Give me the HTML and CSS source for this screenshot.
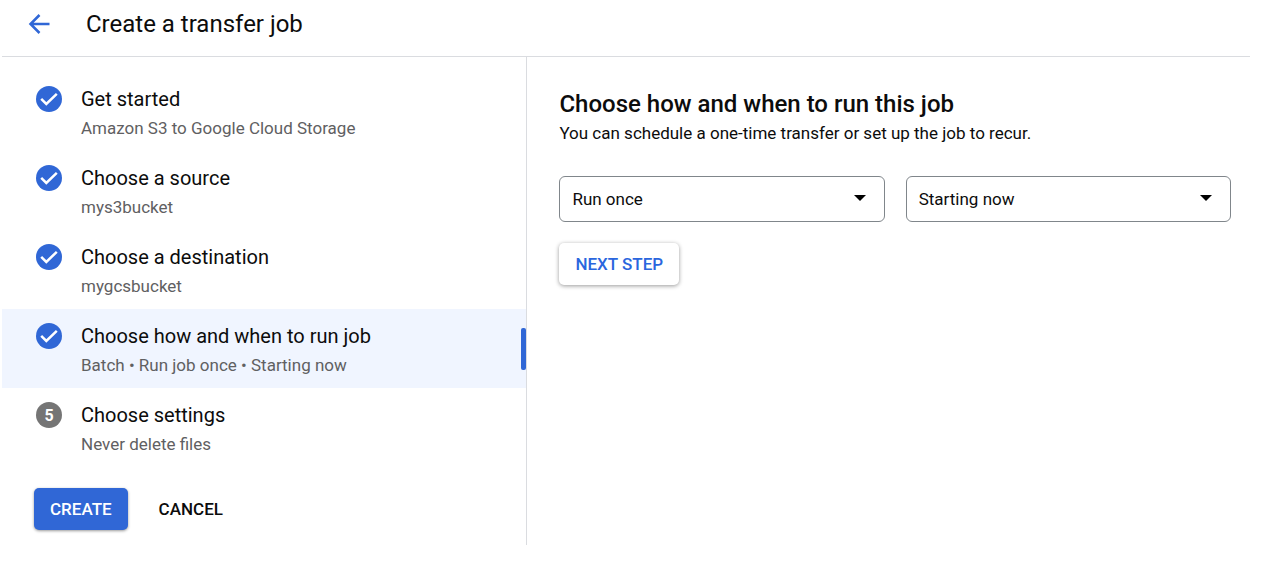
FILE: index.html
```html
<!DOCTYPE html>
<html lang="en">
<head>
<meta charset="utf-8">
<meta name="viewport" content="width=device-width, initial-scale=1">
<title>Create a transfer job</title>
<link rel="stylesheet" href="styles.css">
</head>
<body>
<header class="topbar">
  <button class="back" type="button" aria-label="Back">
    <svg viewBox="0 0 28 28" width="28" height="28"><path d="M24.500 14H6M14.500 5L5.500 14l9 9" fill="none" stroke="currentColor" stroke-width="2.500"/></svg>
  </button>
  <h1 class="title">Create a transfer job</h1>
</header>
<div class="layout">
  <nav class="sidebar" aria-label="Steps">
    <ol class="steps">
      <li class="step">
        <span class="badge"><svg viewBox="0 0 26 26" width="26" height="26"><path d="M5.200 12.800l5.100 5.100L20.800 7.800" fill="none" stroke="currentColor" stroke-width="2.500"/></svg></span>
        <div><h2 class="step-title">Get started</h2><p class="step-note">Amazon S3 to Google Cloud Storage</p></div>
      </li>
      <li class="step">
        <span class="badge"><svg viewBox="0 0 26 26" width="26" height="26"><path d="M5.200 12.800l5.100 5.100L20.800 7.800" fill="none" stroke="currentColor" stroke-width="2.500"/></svg></span>
        <div><h2 class="step-title">Choose a source</h2><p class="step-note">mys3bucket</p></div>
      </li>
      <li class="step">
        <span class="badge"><svg viewBox="0 0 26 26" width="26" height="26"><path d="M5.200 12.800l5.100 5.100L20.800 7.800" fill="none" stroke="currentColor" stroke-width="2.500"/></svg></span>
        <div><h2 class="step-title">Choose a destination</h2><p class="step-note">mygcsbucket</p></div>
      </li>
      <li class="step step-active" aria-current="step">
        <span class="badge"><svg viewBox="0 0 26 26" width="26" height="26"><path d="M5.200 12.800l5.100 5.100L20.800 7.800" fill="none" stroke="currentColor" stroke-width="2.500"/></svg></span>
        <div><h2 class="step-title">Choose how and when to run job</h2><p class="step-note">Batch • Run job once • Starting now</p></div>
      </li>
      <li class="step">
        <span class="badge badge-pending">5</span>
        <div><h2 class="step-title">Choose settings</h2><p class="step-note">Never delete files</p></div>
      </li>
    </ol>
    <div class="actions">
      <button class="btn btn-primary" type="button">CREATE</button>
      <button class="btn btn-text" type="button">CANCEL</button>
    </div>
  </nav>
  <main class="content">
    <h2 class="heading">Choose how and when to run this job</h2>
    <p class="lead">You can schedule a one-time transfer or set up the job to recur.</p>
    <div class="fields">
      <div class="field">
        <select class="select" aria-label="Frequency"><option>Run once</option></select>
        <svg class="caret" viewBox="0 0 12 6" width="12" height="6"><path d="M0 0h12L6 6z"/></svg>
      </div>
      <div class="field">
        <select class="select" aria-label="Start"><option>Starting now</option></select>
        <svg class="caret" viewBox="0 0 12 6" width="12" height="6"><path d="M0 0h12L6 6z"/></svg>
      </div>
    </div>
    <button class="btn btn-raised" type="button">NEXT STEP</button>
  </main>
</div>
</body>
</html>
```
FILE: styles.css
```css
* { box-sizing: border-box; }
body {
  margin: 0;
  padding: 0 16px 0 2px;
  background: #fff;
  color: #0c0c0c;
  font-family: Roboto, "Liberation Sans", sans-serif;
}
h1, h2, p, ol { margin: 0; padding: 0; }
button, select { font-family: inherit; }
.topbar {
  display: flex;
  align-items: center;
  gap: 33px;
  height: 57px;
  padding: 0 23px 8px;
  border-bottom: 1px solid #dadce0;
}
.back {
  display: flex;
  padding: 0;
  border: 0;
  background: none;
  color: #3067d6;
}
.title { font-size: 24px; line-height: 32px; font-weight: 400; }
.layout { display: grid; grid-template-columns: 42.1% 1fr; }
.sidebar { border-right: 1px solid #dadce0; padding: 15px 0; }
.steps { list-style: none; }
.step {
  position: relative;
  display: flex;
  gap: 19px;
  padding: 13px 34px 8px;
}
.step-active { background: #f0f5ff; }
.step-active::after {
  content: "";
  position: absolute;
  right: 0;
  top: 19px;
  width: 5px;
  height: 42px;
  border-radius: 2px;
  background: #3067d6;
}
.badge {
  display: flex;
  align-items: center;
  justify-content: center;
  flex: none;
  width: 26px;
  height: 26px;
  margin-top: 1px;
  border-radius: 50%;
  background: #3067d6;
  color: #fff;
}
.badge-pending { background: #757575; font-size: 16px; font-weight: 700; }
.step-title { font-size: 20px; line-height: 28px; font-weight: 400; }
.step-note { font-size: 17px; line-height: 30px; color: #5f6062; }
.actions { display: flex; gap: 15px; padding: 21px 32px 0; }
.btn {
  height: 42px;
  padding: 0 16px;
  border: 0;
  border-radius: 5px;
  font-size: 17px;
  font-weight: 500;
}
.btn-primary { background: #3067d6; color: #fff; box-shadow: 0 1px 3px rgba(0, 0, 0, .4); }
.btn-text { background: none; color: #0c0c0c; }
.btn-raised { background: #fff; color: #2a66de; box-shadow: 0 1px 4px rgba(0, 0, 0, .4); }
.content { padding: 32px 19px 0 32px; }
.heading { font-size: 24px; line-height: 30px; font-weight: 500; }
.lead { font-size: 17px; line-height: 28px; }
.fields {
  display: grid;
  grid-template-columns: 1fr 1fr;
  gap: 21px;
  margin: 29px 0 21px;
}
.field { position: relative; }
.select {
  appearance: none;
  display: block;
  width: 100%;
  height: 46px;
  padding: 0 40px 0 12px;
  border: 1px solid #80868b;
  border-radius: 6px;
  background: #fff;
  color: #0c0c0c;
  font-size: 17px;
}
.caret {
  position: absolute;
  right: 19px;
  top: 19px;
  pointer-events: none;
}
```
